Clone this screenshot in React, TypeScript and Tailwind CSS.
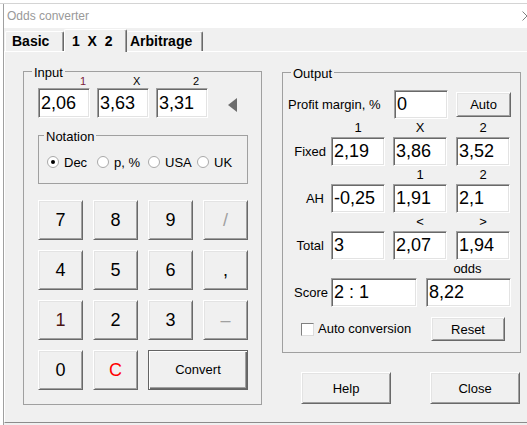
import React from "react";
import clsx from "clsx";

// classic raised / sunken bevels
const raised =
  "bg-[#f0f0f0] border border-t-white border-l-white border-r-[#696969] border-b-[#696969] shadow-[inset_1px_1px_0_#e3e3e3,inset_-1px_-1px_0_#a0a0a0]";
const sunken =
  "bg-white border border-t-[#a0a0a0] border-l-[#a0a0a0] border-r-white border-b-white shadow-[inset_1px_1px_0_#696969,inset_-1px_-1px_0_#e3e3e3]";

const Btn = ({ children, className }: { children: React.ReactNode; className?: string }) => (
  <button type="button" className={clsx(raised, "flex items-center justify-center text-[13px] leading-none", className)}>
    {children}
  </button>
);

const Field = ({ value, className }: { value: string; className?: string }) => (
  <input
    type="text"
    defaultValue={value}
    className={clsx(sunken, "pl-[2px] text-[18px] leading-none text-black outline-none", className)}
  />
);

const GroupBox = ({
  label,
  className,
  labelClass,
  children,
}: {
  label: string;
  className?: string;
  labelClass?: string;
  children: React.ReactNode;
}) => (
  <div className={clsx("relative border border-[#a0a0a0]", className)}>
    <span className={clsx("absolute top-[-7px] bg-[#f0f0f0] px-[2px] text-[13px] leading-[15px]", labelClass)}>
      {label}
    </span>
    {children}
  </div>
);

const Radio = ({ label, checked, width }: { label: string; checked?: boolean; width: string }) => (
  <div className={clsx("flex items-center h-[16px]", width)}>
    <svg width="12" height="12" viewBox="0 0 12 12">
      <circle cx="6" cy="6" r="5.5" fill="#fff" stroke="#a8a8a8" />
      {checked && <circle cx="6" cy="6" r="2" fill="#000" />}
    </svg>
    <span className="ml-[5px] text-[13px] leading-none">{label}</span>
  </div>
);

const keys: { label: string; className?: string; wide?: boolean; def?: boolean }[] = [
  { label: "7" },
  { label: "8" },
  { label: "9" },
  { label: "/", className: "text-[#a0a0a0]" },
  { label: "4" },
  { label: "5" },
  { label: "6" },
  { label: "," },
  { label: "1", className: "text-[#4a1414]" },
  { label: "2" },
  { label: "3" },
  { label: "–", className: "text-[#a0a0a0]" },
  { label: "0" },
  { label: "C", className: "text-[#ff0000]" },
];

const rows = [
  { name: "Fixed", pr: "pr-[5px]", values: ["2,19", "3,86", "3,52"], next: ["", "1", "2"] },
  { name: "AH", pr: "pr-[7px]", values: ["-0,25", "1,91", "2,1"], next: ["", "<", ">"] },
  { name: "Total", pr: "pr-[7px]", values: ["3", "2,07", "1,94"], next: ["", "", "odds"] },
];

export default function App() {
  return (
    <div className="w-[527px] h-[425px] overflow-hidden bg-[#f0f0f0] font-['Liberation_Sans',Arial,sans-serif] text-black flex flex-col select-none">
      <div className="h-[4px] shrink-0 bg-white border-b border-[#d4d4d4]" />
      <div className="flex flex-1 min-h-0">
        <div className="w-[4px] shrink-0 bg-white border-r border-[#a0a0a0]" />
        <div className="w-[540px] shrink-0 flex flex-col">
          {/* title bar */}
          <div className="h-[24px] shrink-0 bg-white flex items-center pl-[3px] text-[12px] text-[#999999]">
            <span>Odds converter</span>
            <svg className="ml-auto mr-[12px]" width="10" height="10" viewBox="0 0 10 10">
              <path d="M0.5 0.5 L9.5 9.5 M9.5 0.5 L0.5 9.5" stroke="#808080" strokeWidth="1" />
            </svg>
          </div>

          {/* tabs */}
          <div className="h-[23px] shrink-0 flex items-end pl-[1px] text-[14px] font-bold">
            <div className="h-[20px] w-[59px] flex items-center pl-[6px] rounded-t-[2px] border-t border-l border-r border-t-white border-l-white border-r-[#696969] shadow-[inset_-1px_0_0_#a0a0a0]">
              Basic
            </div>
            <div className="relative z-10 mb-[-1px] h-[23px] w-[63px] flex items-center pl-[7px] bg-[#f0f0f0] rounded-t-[2px] border-t border-l border-r border-t-white border-l-white border-r-[#696969] shadow-[inset_-1px_0_0_#a0a0a0] whitespace-pre">
              {"1  X  2"}
            </div>
            <div className="h-[20px] w-[76px] flex items-center pl-[3px] rounded-t-[2px] border-t border-r border-t-white border-r-[#696969] shadow-[inset_-1px_0_0_#a0a0a0]">
              Arbitrage
            </div>
          </div>

          {/* tab panel */}
          <div className="h-[372px] shrink-0 flex items-start pl-[18px] pt-[19px] border-t border-l border-b border-t-white border-l-white border-b-[#8c8c8c]">
            {/* Input */}
            <GroupBox label="Input" labelClass="left-[8px]" className="w-[239px] h-[334px] pt-[3px] pl-[14px]">
              <div className="flex h-[13px] gap-[7px] text-[11px] leading-[13px]">
                <div className="w-[52px] pl-[42px] text-[#7b1c3a]">1</div>
                <div className="w-[52px] pl-[36px]">X</div>
                <div className="w-[52px] pl-[37px]">2</div>
              </div>
              <div className="flex items-center h-[30px] gap-[7px]">
                <Field value="2,06" className="w-[52px] h-[30px]" />
                <Field value="3,63" className="w-[52px] h-[30px]" />
                <Field value="3,31" className="w-[52px] h-[30px]" />
                <svg className="ml-[13px] mt-[3px]" width="9" height="14" viewBox="0 0 9 14">
                  <polygon points="9,0 9,14 0,7" fill="#6d6d6d" />
                </svg>
              </div>

              <GroupBox label="Notation" labelClass="left-[5px]" className="mt-[17px] w-[210px] h-[49px] pt-[18px] pl-[8px]">
                <div className="flex">
                  <Radio label="Dec" checked width="w-[50px]" />
                  <Radio label="p, %" width="w-[51px]" />
                  <Radio label="USA" width="w-[49px]" />
                  <Radio label="UK" width="w-[40px]" />
                </div>
              </GroupBox>

              <div className="mt-[16px] grid grid-cols-[repeat(4,45px)] auto-rows-[40px] gap-[10px]">
                {keys.map((k) => (
                  <Btn key={k.label} className={clsx("text-[18px]", k.className)}>
                    {k.label}
                  </Btn>
                ))}
                <button
                  type="button"
                  className="col-span-2 flex items-center justify-center text-[13px] bg-[#f0f0f0] border border-[#646464] shadow-[inset_1px_1px_0_#fff,inset_-1px_-1px_0_#696969,inset_-2px_-2px_0_#a0a0a0]"
                >
                  Convert
                </button>
              </div>
            </GroupBox>

            {/* right column */}
            <div className="ml-[20px] flex flex-col">
              <GroupBox label="Output" labelClass="left-[8px]" className="mt-[1px] w-[239px] h-[281px] pt-[17px] pl-[5px] text-[13px]">
                <div className="flex items-center h-[29px]">
                  <div className="w-[106px]">Profit margin, %</div>
                  <input
                    type="text"
                    defaultValue="0"
                    className={clsx(sunken, "bg-[#f7f7f7] w-[54px] h-[29px] pl-[2px] text-[18px] leading-none outline-none")}
                  />
                  <Btn className="ml-[8px] w-[55px] h-[25px]">Auto</Btn>
                </div>

                <div className="flex h-[18px] leading-[18px]">
                  <div className="w-[43px]" />
                  <div className="w-[54px] text-center">1</div>
                  <div className="ml-[8px] w-[54px] text-center">X</div>
                  <div className="ml-[9px] w-[54px] text-center">2</div>
                </div>

                {rows.map((r) => (
                  <div key={r.name}>
                    <div className="flex items-center h-[29px]">
                      <div className={clsx("w-[43px] text-right", r.pr)}>{r.name}</div>
                      <Field value={r.values[0]} className="w-[54px] h-[29px]" />
                      <Field value={r.values[1]} className="ml-[8px] w-[54px] h-[29px]" />
                      <Field value={r.values[2]} className="ml-[9px] w-[54px] h-[29px]" />
                    </div>
                    <div className="flex h-[18px] leading-[18px]">
                      <div className="w-[43px]" />
                      <div className="w-[54px]" />
                      {r.name === "Total" ? (
                        <div className="ml-[40px] w-[85px] text-center">odds</div>
                      ) : (
                        <>
                          <div className="ml-[8px] w-[54px] text-center">{r.next[1]}</div>
                          <div className="ml-[9px] w-[54px] text-center">{r.next[2]}</div>
                        </>
                      )}
                    </div>
                  </div>
                ))}

                <div className="flex items-center h-[29px]">
                  <div className="w-[43px] text-right pr-[3px]">Score</div>
                  <Field value="2 : 1" className="w-[86px] h-[29px]" />
                  <Field value="8,22" className="ml-[9px] w-[85px] h-[29px]" />
                </div>

                <div className="mt-[10px] flex items-center h-[24px]">
                  <div className="ml-[13px] w-[13px] h-[13px] bg-white border border-t-[#808080] border-l-[#808080] border-r-[#dcdcdc] border-b-[#dcdcdc]" />
                  <span className="ml-[4px]">Auto conversion</span>
                  <Btn className="ml-auto mr-[15px] w-[74px] h-[24px]">Reset</Btn>
                </div>
              </GroupBox>

              <div className="mt-[19px] flex">
                <Btn className="ml-[19px] w-[90px] h-[32px]">Help</Btn>
                <Btn className="ml-[39px] w-[90px] h-[32px]">Close</Btn>
              </div>
            </div>
          </div>
        </div>
      </div>
    </div>
  );
}
